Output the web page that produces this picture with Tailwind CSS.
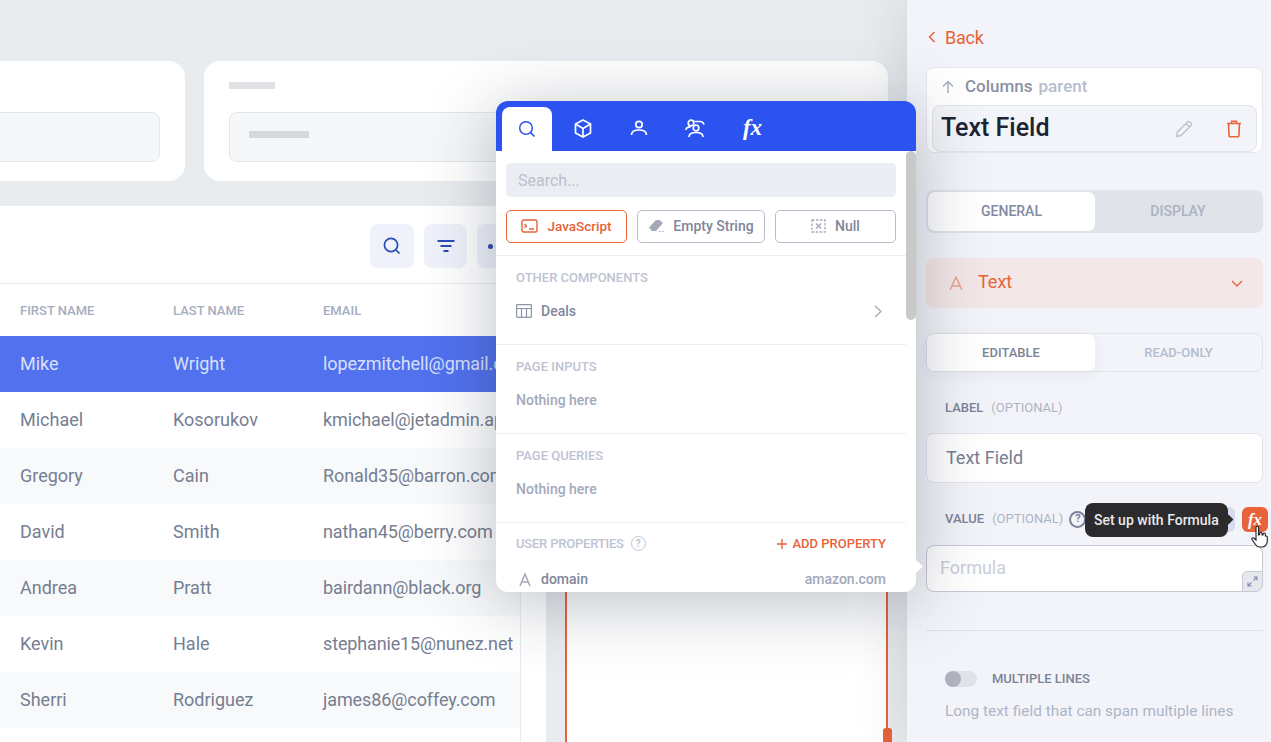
<!DOCTYPE html>
<html lang="en">
<head>
  <meta charset="UTF-8" />
  <title>Text Field</title>
  <script src="https://cdn.jsdelivr.net/npm/@tailwindcss/browser@4"></script>
</head>
<body class="bg-[#e9ecef] font-['Roboto',sans-serif] overflow-hidden">
  <div class="relative flex w-[1271px] h-[742px] overflow-hidden">

    <!-- Canvas -->
    <main class="w-[907px] h-[742px] shrink-0 overflow-hidden bg-[#e9ecef]">
      <div class="flex gap-[19px] pt-[61px] ml-[-120px] h-[206px]">
        <div class="w-[305px] h-[120px] shrink-0 bg-white rounded-[16px] pt-[51px] pl-[25px] pr-[25px]">
          <div class="h-[50px] bg-[#f6f7f9] border border-[#e3e6ef] rounded-[8px]"></div>
        </div>
        <div class="w-[684px] h-[120px] shrink-0 bg-white rounded-[16px] px-[25px] pt-[21px]">
          <div class="w-[46px] h-[7px] bg-[#e0e2e6]"></div>
          <div class="mt-[23px] h-[50px] bg-[#f6f7f9] border border-[#e3e6ef] rounded-[8px] pl-[19px] pt-[18px]">
            <div class="w-[60px] h-[7px] bg-[#d5d8dd]"></div>
          </div>
        </div>
      </div>

      <div class="flex h-[536px]">
        <section class="w-[546px] shrink-0 bg-white">
          <div class="flex gap-[10px] h-[78px] pt-[18px] pl-[370px] border-b border-[#e9ebef]">
            <button class="w-[44px] h-[44px] shrink-0 rounded-[8px] bg-[#eff2fa] flex items-center justify-center">
              <svg class="w-[20px] h-[20px]" viewBox="0 0 20 20" fill="none" stroke="#2a4bb5" stroke-width="1.7"><circle cx="9" cy="9" r="6.6"/><path d="M14 14l3.5 3.5"/></svg>
            </button>
            <button class="w-[43px] h-[44px] shrink-0 rounded-[8px] bg-[#eff2fa] flex items-center justify-center">
              <svg class="w-[18px] h-[12px]" viewBox="0 0 18 12" fill="none" stroke="#2a4bb5" stroke-width="1.8"><path d="M0.5 1h17M3.5 6h11M6.500 11h5"/></svg>
            </button>
            <button class="w-[43px] h-[44px] shrink-0 rounded-[8px] bg-[#eff2fa] flex items-center justify-start pl-[11px]">
              <span class="w-[5px] h-[5px] rounded-full bg-[#2a4bb5]"></span>
            </button>
          </div>

          <div class="w-[521px] h-[458px] border-r border-[#e9ebef] overflow-hidden">
            <div class="flex items-center h-[52px] pt-[1px] text-[13px] font-medium text-[#a6adbf]">
              <span class="w-[173px] shrink-0 pl-[20px]">FIRST NAME</span>
              <span class="w-[150px] shrink-0">LAST NAME</span>
              <span>EMAIL</span>
            </div>
            <div class="flex items-center h-[56px] pb-[2px] text-[18px] text-[#d8e0fb] bg-[#5271ee] whitespace-nowrap">
              <span class="w-[173px] shrink-0 pl-[20px]">Mike</span><span class="w-[150px] shrink-0">Wright</span><span class="shrink-0 tracking-[-0.1px]">lopezmitchell@gmail.com</span>
            </div>
            <div class="flex items-center h-[56px] pb-[2px] text-[18px] text-[#767e91] whitespace-nowrap">
              <span class="w-[173px] shrink-0 pl-[20px]">Michael</span><span class="w-[150px] shrink-0">Kosorukov</span><span class="shrink-0 tracking-[-0.1px]">kmichael@jetadmin.app</span>
            </div>
            <div class="flex items-center h-[56px] pb-[2px] text-[18px] text-[#767e91] bg-[#f8f9fb] whitespace-nowrap">
              <span class="w-[173px] shrink-0 pl-[20px]">Gregory</span><span class="w-[150px] shrink-0">Cain</span><span class="shrink-0 tracking-[-0.1px]">Ronald35@barron.com</span>
            </div>
            <div class="flex items-center h-[56px] pb-[2px] text-[18px] text-[#767e91] whitespace-nowrap">
              <span class="w-[173px] shrink-0 pl-[20px]">David</span><span class="w-[150px] shrink-0">Smith</span><span class="shrink-0 tracking-[-0.1px]">nathan45@berry.com</span>
            </div>
            <div class="flex items-center h-[56px] pb-[2px] text-[18px] text-[#767e91] bg-[#f8f9fb] whitespace-nowrap">
              <span class="w-[173px] shrink-0 pl-[20px]">Andrea</span><span class="w-[150px] shrink-0">Pratt</span><span class="shrink-0 tracking-[-0.1px]">bairdann@black.org</span>
            </div>
            <div class="flex items-center h-[56px] pb-[2px] text-[18px] text-[#767e91] whitespace-nowrap">
              <span class="w-[173px] shrink-0 pl-[20px]">Kevin</span><span class="w-[150px] shrink-0">Hale</span><span class="shrink-0 tracking-[-0.15px]">stephanie15@nunez.net</span>
            </div>
            <div class="flex items-center h-[56px] pb-[2px] text-[18px] text-[#767e91] bg-[#f8f9fb] whitespace-nowrap">
              <span class="w-[173px] shrink-0 pl-[20px]">Sherri</span><span class="w-[150px] shrink-0">Rodriguez</span><span class="shrink-0 tracking-[-0.1px]">james86@coffey.com</span>
            </div>
          </div>
        </section>

        <div class="w-[19px] shrink-0"></div>
        <section class="relative w-[323px] shrink-0 bg-white border-x-2 border-[#e8623a]">
          <span class="absolute right-[-6px] bottom-0 w-[9px] h-[14px] rounded-t-[3px] bg-[#e8623a]"></span>
        </section>
      </div>
    </main>

    <!-- Sidebar -->
    <aside class="w-[364px] h-[742px] shrink-0 bg-[#f3f4f9] shadow-[-12px_0_40px_rgba(40,50,70,0.10)] pl-[19px] pr-[8px] pt-[26px] z-10">
      <div class="flex items-center gap-[9px] h-[22px] text-[18px] text-[#e8623a] tracking-[-0.2px]">
        <svg class="w-[8px] h-[12px] ml-[2px]" viewBox="0 0 8 12" fill="none" stroke="currentColor" stroke-width="1.5"><path d="M6.5 1L1.5 6l5 5"/></svg>
        Back
      </div>
      <div class="mt-[19px] h-[86px] bg-white border border-[#e6e8ef] rounded-[8px] px-[5px]">
        <div class="flex items-center h-[37px] pl-[9px] text-[17px] font-medium">
          <svg class="w-[14px] h-[14px] mr-[10px]" viewBox="0 0 14 14" fill="none" stroke="#a7aebf" stroke-width="1.5"><path d="M7 13V2M2 6.500L7 1.500l5 5"/></svg>
          <span class="text-[#8b92a5]">Columns</span><span class="ml-[6px] text-[#b8bdcc]">parent</span>
        </div>
        <div class="flex items-center h-[47px] bg-[#f3f4f9] border border-[#e3e5ec] rounded-[8px] pl-[8px] pr-[14px]">
          <span class="flex-1 pb-[2px] text-[25px] font-medium text-[#1c2333]">Text Field</span>
          <svg class="w-[18px] h-[18px] mr-[33px]" viewBox="0 0 18 18" fill="none" stroke="#bcc3d3" stroke-width="1.5"><path d="M1.500 16.500l1-4.500L12.500 2a1.600 1.600 0 012.200 0l1.300 1.300a1.600 1.600 0 010 2.200L6 15.500z"/><path d="M11 3.500L14.500 7"/></svg>
          <svg class="w-[16px] h-[18px]" viewBox="0 0 16 18" fill="none" stroke="#e8623a" stroke-width="1.6"><path d="M1 3.500h14M5.500 3.500V1.200h5v2.300M2.500 3.500l.6 12.300a1 1 0 001 .9h7.800a1 1 0 001-.9l.6-12.300"/></svg>
        </div>
      </div>

      <div class="mt-[37px] flex h-[43px] bg-[#e0e3ea] rounded-[8px] p-[2px] text-[14px] font-medium">
        <div class="w-[167px] bg-white rounded-[7px] flex items-center justify-center text-[#828a9f]">GENERAL</div>
        <div class="flex-1 flex items-center justify-center text-[#adb2c1]">DISPLAY</div>
      </div>

      <div class="mt-[25px] flex items-center h-[50px] pb-[4px] bg-[#f3e7e7] rounded-[8px] pl-[23px] pr-[20px] text-[18px] text-[#e8623a]">
        <svg class="w-[14px] h-[14px] mt-[4px] mr-[15px]" viewBox="0 0 14 14" fill="none" stroke="#eda28c" stroke-width="1.500"><path d="M1 14L7 1l6 13M3 10h8"/></svg>
        <span class="flex-1">Text</span>
        <svg class="w-[12px] h-[7px] mt-[4px]" viewBox="0 0 12 7" fill="none" stroke="currentColor" stroke-width="1.300"><path d="M1 1l5 5 5-5"/></svg>
      </div>

      <div class="mt-[25px] flex h-[39px] border border-[#e3e5ec] rounded-[8px] text-[13px] font-medium">
        <div class="w-[168px] bg-white rounded-[7px] flex items-center justify-center text-[#7b8398] shadow-[0_4px_16px_rgba(40,50,70,0.06)]">EDITABLE</div>
        <div class="flex-1 flex items-center justify-center text-[#b3bccd]">READ-ONLY</div>
      </div>

      <div class="mt-[26px] pl-[19px] h-[20px] flex items-center gap-[8px] text-[13px]">
        <span class="font-medium text-[#7b8398]">LABEL</span><span class="text-[#adb4c6]">(OPTIONAL)</span>
      </div>
      <div class="mt-[15px] flex items-center h-[50px] pb-[2px] bg-white border border-[#e3e5ec] rounded-[8px] pl-[19px] text-[18px] text-[#767e91]">Text Field</div>

      <div class="relative mt-[26px] pl-[19px] h-[20px] flex items-center gap-[8px] text-[13px]">
        <span class="font-medium text-[#7b8398]">VALUE</span><span class="text-[#adb4c6]">(OPTIONAL)</span>
        <span class="ml-[-2px] w-[17px] h-[17px] rounded-full border-2 border-[#7b8398] text-[11px] font-bold text-[#7b8398] flex items-center justify-center">?</span>
        <!-- button behind the tooltip, tooltip, fx button -->
        <span class="absolute left-[283px] top-[-2px] w-[26px] h-[25px] rounded-[6px] bg-[#d5dcf2]"></span>
        <span class="absolute left-[159px] top-[-6px] flex items-center h-[34px] px-[9px] rounded-[8px] bg-[#2b2b2e] text-[14px] font-medium text-[#e9e9ea] whitespace-nowrap">Set up with Formula</span>
        <span class="absolute left-[299px] top-[7px] w-[7px] h-[7px] rotate-45 bg-[#2b2b2e]"></span>
        <span class="absolute left-[316px] top-[-2px] w-[26px] h-[25px] rounded-[6px] bg-[#e8623a] text-white italic font-['Liberation_Serif',serif] font-bold text-[17px] flex items-center justify-center">fx</span>
        <svg class="absolute left-[325px] top-[16px] w-[18px] h-[24px] z-10" viewBox="0 0 18 24" fill="#fff" stroke="#1c1c1c" stroke-width="1.100"><path d="M5 2.500a1.300 1.300 0 012.600 0V10l1-.3V8.500a1.200 1.200 0 012.400 0V10l1 0V9.200a1.200 1.200 0 012.400 0V11l.6 0a1.200 1.200 0 011.300 1.200V16c0 3-2 6-5 6H8.500c-2 0-3-1-4-2.500L1 14.500c-.7-1 .7-2.300 1.700-1.500L5 15z"/></svg>
      </div>
      <div class="relative mt-[16px] flex items-center h-[47px] pb-[2px] bg-white border border-[#c5c9d4] rounded-[8px] pl-[13px] text-[18px] text-[#cbced7]">Formula
        <span class="absolute right-[-1px] bottom-[-1px] w-[21px] h-[21px] bg-[#e6e8ee] border border-[#c5c9d4] rounded-tl-[5px] rounded-br-[8px] flex items-center justify-center">
          <svg class="w-[11px] h-[11px]" viewBox="0 0 11 11" fill="none" stroke="#7f8cb3" stroke-width="1.100"><path d="M6.500 1H10v3.500M10 1L6.500 4.500M4.500 10H1V6.500M1 10l3.500-3.500"/></svg>
        </span>
      </div>

      <div class="mt-[38px] border-t border-[#dfe1e8]"></div>

      <div class="mt-[38px] pl-[19px] flex items-center h-[20px]">
        <span class="relative w-[32px] h-[16px] rounded-full bg-[#e0e3ea]"><span class="absolute left-0 top-0 w-[16px] h-[16px] rounded-full bg-[#aeb2bf]"></span></span>
        <span class="ml-[15px] text-[13px] font-medium text-[#7b8398]">MULTIPLE LINES</span>
      </div>
      <div class="mt-[11px] pl-[19px] text-[15.4px] text-[#adb4c6] whitespace-nowrap">Long text field that can span multiple lines</div>
    </aside>

    <!-- Data source popover -->
    <div class="absolute left-[496px] top-[101px] w-[420px] h-[491px] rounded-[12px] bg-white shadow-[0_10px_70px_rgba(30,40,60,0.30)] overflow-hidden z-20">
      <div class="flex items-end gap-[6px] h-[50px] bg-[#2c52ef] pl-[6px]">
        <div class="w-[50px] h-[44px] rounded-t-[8px] bg-white flex items-center justify-center">
          <svg class="w-[18px] h-[18px]" viewBox="0 0 18 18" fill="none" stroke="#2c52ef" stroke-width="1.500"><circle cx="8" cy="8" r="6.300"/><path d="M12.600 12.600L16.500 16.500"/></svg>
        </div>
        <div class="w-[50px] h-[44px] pb-[2px] flex items-center justify-center">
          <svg class="w-[18px] h-[19px]" viewBox="0 0 18 19" fill="none" stroke="#fff" stroke-width="1.700"><path d="M9 1l7.500 4v9L9 18l-7.500-4V5z"/><path d="M1.500 5L9 9.500 16.500 5M9 9.500V18"/></svg>
        </div>
        <div class="w-[50px] h-[44px] pb-[2px] flex items-center justify-center">
          <svg class="w-[18px] h-[16px]" viewBox="0 0 18 16" fill="none" stroke="#fff" stroke-width="1.700"><circle cx="9" cy="4.500" r="3.200"/><path d="M1.500 15c0-3.500 2.500-5 7.500-5s7.500 1.500 7.500 5"/></svg>
        </div>
        <div class="w-[50px] h-[44px] pb-[2px] flex items-center justify-center">
          <svg class="w-[21px] h-[19px]" viewBox="0 0 21 19" fill="none" stroke="#fff" stroke-width="1.700"><circle cx="6" cy="4" r="2.800"/><circle cx="11" cy="9" r="2.800"/><path d="M1 11c0-2 2-3.200 4.500-3.200M4 18c0-3 2.500-4.500 7-4.500s7 1.500 7 4.500M9 2.500h6c2 0 3.500 1 4 3"/></svg>
        </div>
        <div class="w-[50px] h-[44px] pb-[3px] pl-[3px] flex items-center justify-center font-['Liberation_Serif',serif] italic font-bold text-[23px] leading-none text-white">fx</div>
      </div>

      <div class="absolute right-0 top-[50px] w-[10px] h-[169px] rounded-full bg-[#c9c9c9]"></div>

      <div class="w-[410px]">
        <div class="mx-[10px] mt-[12px] flex items-center h-[34px] pt-[1px] rounded-[5px] bg-[#eaedf2] pl-[12px] text-[16px] text-[#bcc1cc]">Search...</div>
        <div class="flex gap-[10px] mx-[10px] mt-[13px] text-[14px] font-medium">
          <div class="flex items-center justify-center gap-[9px] w-[121px] h-[33px] pb-[1px] rounded-[5px] border border-[#e8623a] text-[13.5px] text-[#e8623a]">
            <svg class="w-[17px] h-[14px]" viewBox="0 0 17 14" fill="none" stroke="currentColor" stroke-width="1.400"><rect x="1" y="1" width="15" height="12" rx="1.500"/><path d="M3.500 5l2 2-2 2M8 10h5"/></svg>
            JavaScript
          </div>
          <div class="flex items-center justify-center gap-[7px] w-[128px] h-[33px] pb-[1px] rounded-[5px] border border-[#b9bdcb] text-[#7f879b]">
            <svg class="w-[18px] h-[14px]" viewBox="0 0 18 14" fill="#a3a9b9"><path d="M1 8.500L8 1h3.500L15 4l-7 8H4z"/><path d="M14 12h1.500v1H14zM11 12h1.500v1H11z"/></svg>
            Empty String
          </div>
          <div class="flex items-center justify-center gap-[9px] w-[121px] h-[33px] pb-[1px] rounded-[5px] border border-[#b9bdcb] text-[#7f879b]">
            <svg class="w-[15px] h-[14px]" viewBox="0 0 15 14" fill="none" stroke="#a3a9b9" stroke-width="1.300" stroke-dasharray="2.500 1.500"><rect x="1" y="1" width="13" height="12"/><path d="M5 4.500l5 5M10 4.500l-5 5" stroke-dasharray="none"/></svg>
            Null
          </div>
        </div>

        <div class="mt-[12px] h-[89px] border-t border-[#eceef3] px-[20px] pt-[12px]">
          <div class="text-[13px] font-medium text-[#bdc3d2]">OTHER COMPONENTS</div>
          <div class="mt-[13px] flex items-center text-[14px] font-medium text-[#7f879b]">
            <svg class="w-[16px] h-[14px] mr-[9px]" viewBox="0 0 16 14" fill="none" stroke="#8d94a7" stroke-width="1.200"><rect x="0.600" y="0.600" width="14.800" height="12.800" rx="1"/><path d="M0.600 4.500h14.800M5.500 4.500v9M10.500 4.500v9"/></svg>
            <span class="flex-1">Deals</span>
            <svg class="w-[8px] h-[13px] mr-[4px]" viewBox="0 0 8 13" fill="none" stroke="#a3a9b9" stroke-width="1.400"><path d="M1 1l6 5.500L1 12"/></svg>
          </div>
        </div>

        <div class="h-[89px] border-t border-[#eceef3] px-[20px] pt-[12px]">
          <div class="text-[13px] font-medium text-[#bdc3d2]">PAGE INPUTS</div>
          <div class="mt-[13px] text-[14px] font-medium text-[#a3a9b9]">Nothing here</div>
        </div>

        <div class="h-[89px] border-t border-[#eceef3] px-[20px] pt-[12px]">
          <div class="text-[13px] font-medium text-[#bdc3d2]">PAGE QUERIES</div>
          <div class="mt-[13px] text-[14px] font-medium text-[#a3a9b9]">Nothing here</div>
        </div>

        <div class="border-t border-[#eceef3] px-[20px] pt-[11px]">
          <div class="flex items-center text-[13px] font-medium text-[#bdc3d2]">
            <span class="tracking-[-0.2px]">USER PROPERTIES</span>
            <span class="ml-[7px] w-[15px] h-[15px] rounded-full border-[1.500px] border-[#bdc3d2] text-[10px] font-bold flex items-center justify-center">?</span>
            <svg class="ml-auto mr-[5px] w-[10px] h-[10px]" viewBox="0 0 10 10" fill="none" stroke="#e8623a" stroke-width="1.400"><path d="M5 0v10M0 5h10"/></svg>
            <span class="text-[#e8623a]">ADD PROPERTY</span>
          </div>
          <div class="mt-[15px] flex items-center text-[14px] font-medium">
            <svg class="w-[12px] h-[13px] mr-[10px] ml-[3px]" viewBox="0 0 12 13" fill="none" stroke="#a3a9b9" stroke-width="1.500"><path d="M1 13L6 1l5 12M2.800 9h6.400"/></svg>
            <span class="flex-1 text-[#7f879b]">domain</span>
            <span class="text-[#a3a9b9]">amazon.com</span>
          </div>
        </div>
      </div>
    </div>
    <!-- popover tail -->
    <span class="absolute left-[912px] top-[562px] w-[9px] h-[9px] rotate-45 bg-white z-20"></span>
  </div>
</body>
</html>
